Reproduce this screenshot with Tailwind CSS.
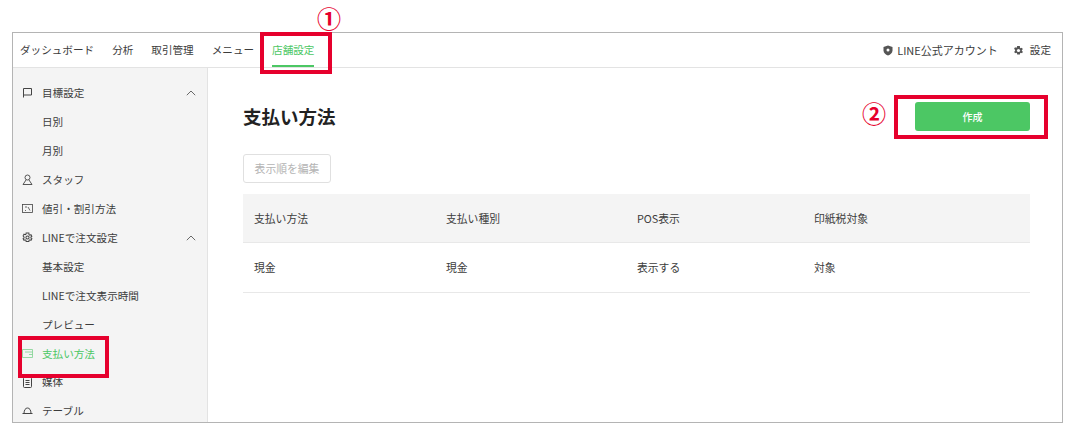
<!DOCTYPE html>
<html lang="ja">
<head>
    <meta charset="UTF-8">
    <title>支払い方法</title>
    <script src="https://cdn.jsdelivr.net/npm/@tailwindcss/browser@4"></script>
</head>
<body class="bg-white font-['Noto_Sans_CJK_JP','Noto_Sans',sans-serif] text-[10.6px] text-[#3c3c3c]">
    <div class="relative h-[441px] w-[1082px] overflow-hidden pl-3 pt-8">
        <!-- Frame -->
        <div class="flex h-[391px] w-[1051px] flex-col border border-[#b4b4b4]">
            <!-- Top nav -->
            <header class="flex h-[35px] shrink-0 items-stretch justify-between border-b border-[#e3e3e3] pl-[7px] pr-[11px]">
                <nav class="flex gap-[18px]">
                    <a class="flex items-center">ダッシュボード</a>
                    <a class="flex items-center">分析</a>
                    <a class="flex items-center">取引管理</a>
                    <a class="flex items-center">メニュー</a>
                    <a class="flex items-center border-b-2 border-[#4cc764] pt-[2px] text-[#4cc764]">店舗設定</a>
                </nav>
                <div class="flex items-center">
                    <svg class="mr-[4px]" width="10" height="11" viewBox="0 0 10 11"><path d="M5 .5 9.500 2v3.500c0 2.500-2 4-4.500 5C2.500 9.500.5 8 .5 5.500V2Z" fill="#555"/><circle cx="5" cy="5" r="1.500" fill="#fff"/></svg>
                    <span class="text-[11px]">LINE公式アカウント</span>
                    <svg class="ml-[15px] mr-[6px]" width="11" height="11" viewBox="0 0 24 24"><path d="M19.400 13a7.600 7.600 0 0 0 0-2l2.100-1.600-2-3.500-2.500 1a7.500 7.500 0 0 0-1.700-1L15 2.300H9l-.4 2.600a7.500 7.500 0 0 0-1.700 1l-2.500-1-2 3.500L4.600 11a7.600 7.600 0 0 0 0 2l-2.100 1.600 2 3.500 2.500-1a7.500 7.500 0 0 0 1.700 1l.4 2.600h6l.4-2.600a7.500 7.500 0 0 0 1.700-1l2.500 1 2-3.500Z" fill="#555"/><circle cx="12" cy="12" r="3.500" fill="#fff"/></svg>
                    <span>設定</span>
                </div>
            </header>

            <div class="flex min-h-0 flex-1">
                <!-- Sidebar -->
                <aside class="h-full w-[195px] shrink-0 overflow-hidden border-r border-[#e3e3e3] bg-[#f4f4f4] pt-[10px]">
                    <div class="flex h-[29px] items-center pl-[9px] pr-[11px]">
                        <svg class="mr-[9px]" width="11" height="11" viewBox="0 0 11 11" fill="none" stroke="#444"><path d="M1.500 10.500V1.500h8v6.500h-8"/></svg>
                        <span class="flex-1">目標設定</span>
                        <svg width="10" height="6" viewBox="0 0 10 6" fill="none" stroke="#444" stroke-width=".8"><path d="M.8 5.200 5 1l4.200 4.200"/></svg>
                    </div>
                    <div class="flex h-[29px] items-center pl-[29px]">日別</div>
                    <div class="flex h-[29px] items-center pl-[29px]">月別</div>
                    <div class="flex h-[29px] items-center pl-[9px]">
                        <svg class="mr-[9px]" width="11" height="11" viewBox="0 0 11 11" fill="none" stroke="#444" stroke-width=".9"><circle cx="5.500" cy="3.500" r="2.500"/><path d="M4 6 1 10.500h9L7 6"/></svg>
                        <span>スタッフ</span>
                    </div>
                    <div class="flex h-[29px] items-center pl-[9px]">
                        <svg class="mr-[9px]" width="11" height="11" viewBox="0 0 11 11" fill="none" stroke="#444" stroke-width=".8"><rect x=".5" y="1.500" width="10" height="8"/><path d="M3 4h2M3 7.500h1M6 4l2 3.500"/></svg>
                        <span>値引・割引方法</span>
                    </div>
                    <div class="flex h-[29px] items-center pl-[9px] pr-[11px]">
                        <svg class="mr-[9px]" width="11" height="11" viewBox="0 0 24 24" fill="none" stroke="#444" stroke-width="2.200"><path d="M19.400 13a7.600 7.600 0 0 0 0-2l2.100-1.600-2-3.500-2.500 1a7.500 7.500 0 0 0-1.700-1L15 2.300H9l-.4 2.600a7.500 7.500 0 0 0-1.700 1l-2.500-1-2 3.500L4.500 11a7.600 7.600 0 0 0 0 2l-2.100 1.600 2 3.500 2.500-1a7.500 7.500 0 0 0 1.700 1l.4 2.600h6l.4-2.600a7.500 7.500 0 0 0 1.700-1l2.500 1 2-3.500Z"/><circle cx="12" cy="12" r="3.500"/></svg>
                        <span class="flex-1">LINEで注文設定</span>
                        <svg width="10" height="6" viewBox="0 0 10 6" fill="none" stroke="#444" stroke-width=".8"><path d="M.8 5.200 5 1l4.200 4.200"/></svg>
                    </div>
                    <div class="flex h-[29px] items-center pl-[29px]">基本設定</div>
                    <div class="flex h-[29px] items-center pl-[29px]">LINEで注文表示時間</div>
                    <div class="flex h-[29px] items-center pl-[29px]">プレビュー</div>
                    <div class="flex h-[29px] items-center pl-[9px] text-[#4cc764]">
                        <svg class="mr-[9px]" width="11" height="11" viewBox="0 0 11 11" fill="none" stroke="#7dd28f" stroke-width=".8"><path d="M10.500 1.500H.5v8h10zM3 4h7.500M7 6.500h3.500"/></svg>
                        <span>支払い方法</span>
                    </div>
                    <div class="flex h-[28px] items-center pl-[9px]">
                        <svg class="mr-[9px]" width="11" height="11" viewBox="0 0 11 11" fill="none" stroke="#444"><rect x="1.500" y=".5" width="8" height="10" rx="1"/><path d="M3.500 3.500h4M3.500 5.500h4M3.500 7.500h4"/></svg>
                        <span>媒体</span>
                    </div>
                    <div class="flex h-[29px] items-center pl-[9px]">
                        <svg class="mr-[9px]" width="11" height="11" viewBox="0 0 11 11" fill="none" stroke="#444"><path d="M.5 8.500h10M2 8.500C2 5 3.500 3 5.500 3S9 5 9 8.500"/></svg>
                        <span>テーブル</span>
                    </div>
                </aside>

                <!-- Main -->
                <main class="min-w-0 flex-1 pl-[35px] pr-[32px] pt-[34px]">
                    <div class="flex h-[29px] items-center justify-between">
                        <h1 class="text-[18.500px] font-bold leading-none text-[#222]">支払い方法</h1>
                        <button class="h-[29px] w-[115px] rounded-[3px] bg-[#4cc764] text-[10px] font-medium text-white">作成</button>
                    </div>
                    <button class="mt-[23px] h-[29px] w-[88px] rounded-[3px] border border-[#e0e0e0] text-[10.800px] text-[#b4b4b4]">表示順を編集</button>
                    <div class="mt-[11px] text-[10.800px]">
                        <div class="grid h-[49px] grid-cols-[192px_191px_177px_1fr] items-center border-b border-[#e8e8e8] bg-[#f4f4f4] pl-[11px]">
                            <div>支払い方法</div>
                            <div>支払い種別</div>
                            <div>POS表示</div>
                            <div>印紙税対象</div>
                        </div>
                        <div class="grid h-[50px] grid-cols-[192px_191px_177px_1fr] items-center border-b border-[#e8e8e8] pl-[11px]">
                            <div>現金</div>
                            <div>現金</div>
                            <div>表示する</div>
                            <div>対象</div>
                        </div>
                    </div>
                </main>
            </div>
        </div>

        <!-- Annotations -->
        <div class="absolute left-[260px] top-[32px] h-[42px] w-[72px] border-[4px] border-[#e6002d]"></div>
        <div class="absolute left-[18px] top-[336px] h-[42px] w-[91px] border-[4px] border-[#e6002d]"></div>
        <div class="absolute left-[894px] top-[95px] h-[44px] w-[154px] border-[4px] border-[#e6002d]"></div>
        <span class="absolute left-[317px] top-[3px] text-[24px] font-bold leading-[30px] text-[#e6002d]">①</span>
        <span class="absolute left-[862px] top-[98px] text-[24px] font-bold leading-[30px] text-[#e6002d]">②</span>
    </div>
</body>
</html>
